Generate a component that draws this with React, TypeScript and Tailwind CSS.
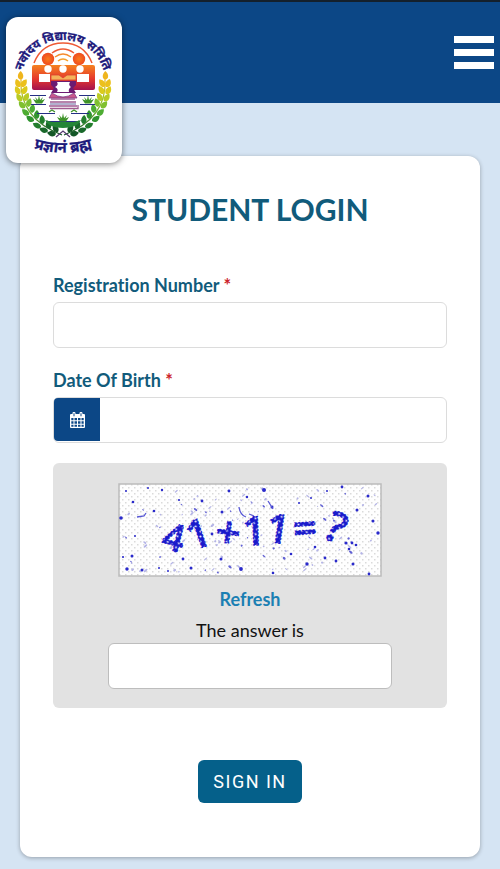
import React from "react";

const NAVY = "#1d1a7c";

// Leaves of the wreath's left half: position and angle.
const leaves: [number, number, number][] = [
  [21, 80, -92],
  [20, 87, -116], [22, 87, -60],
  [20, 94, -120], [23, 94, -64],
  [22, 101, -126], [25, 101, -68],
  [25, 108, -132], [28, 107, -74],
  [29, 115, -140], [32, 113, -82],
  [34, 121, -148], [37, 119, -90],
  [41, 127, -156], [43, 124, -98],
  [48, 131, -164], [50, 129, -108],
  [56, 134, -172], [58, 132, -122],
];

const leafColors = [
  "#efb51c", "#ecc01c", "#ecc01c", "#dccb1c", "#dccb1c", "#b9cb25", "#b9cb25", "#7fc02f", "#7fc02f",
  "#4dac32", "#4dac32", "#2f942f", "#2f942f", "#237d2d", "#237d2d", "#19682a", "#19682a", "#145727", "#145727",
];

function Wreath() {
  return (
    <g>
      <path d="M21 80Q19 118 62 135" fill="none" stroke="url(#stem)" strokeWidth="1.200" />
      {leaves.map(([x, y, a], i) => (
        <path
          key={i}
          d="M0 0C1.500 -4.200 6 -3.800 9 0C6 3.200 1.500 3.200 0 0Z"
          fill={leafColors[i]}
          transform={`translate(${x} ${y}) rotate(${a})`}
        />
      ))}
    </g>
  );
}

function Tuft({ x, y }: { x: number; y: number }) {
  return (
    <path
      d="M0 3.500H-3L-6 -1L-2.500 0.500L-4 -3L-1 0L0 -5L1 0L4 -3L2.500 0.500L6 -1L3 3.500Z"
      transform={`translate(${x} ${y})`}
      fill="#3d9227"
    />
  );
}

function Emblem() {
  return (
    <svg viewBox="6 17 116 146" className="block h-full w-full" role="img" aria-label="नवोदय विद्यालय समिति">
      <defs>
        <linearGradient id="stem" gradientUnits="userSpaceOnUse" x1="0" y1="78" x2="0" y2="135">
          <stop offset="0" stopColor="#efb51c" />
          <stop offset="0.500" stopColor="#7fc02f" />
          <stop offset="1" stopColor="#145727" />
        </linearGradient>
        <linearGradient id="desk" x1="0" y1="0" x2="0" y2="1">
          <stop offset="0" stopColor="#f58220" />
          <stop offset="0.550" stopColor="#e5382c" />
          <stop offset="1" stopColor="#a3124f" />
        </linearGradient>
        <radialGradient id="head">
          <stop offset="0" stopColor="#fa7a1a" />
          <stop offset="1" stopColor="#ee4a20" />
        </radialGradient>
        <path id="topArc" d="M21 82A42 42 0 0 1 105 82" />
        <path id="bottomArc" d="M30 147Q63 158 96 147" />
      </defs>
      <g
        fill={NAVY}
        stroke={NAVY}
        strokeWidth="0.300"
        textAnchor="middle"
        fontFamily="'Noto Sans Devanagari','Noto Sans','Lohit Devanagari',sans-serif"
        fontWeight="700"
        fontSize="12"
      >
        <text><textPath href="#topArc" startOffset="50%">नवोदय विद्यालय समिति</textPath></text>
        <text fontSize="15"><textPath href="#bottomArc" startOffset="50%">प्रज्ञानं ब्रह्म</textPath></text>
      </g>
      <Wreath />
      <g transform="translate(126 0) scale(-1 1)"><Wreath /></g>
      <g fill="none" stroke="#ee5a35" strokeWidth="1.500">
        <path d="M34 63Q42 43 63 43Q84 43 92 63" />
        <path d="M52 53Q63 45 74 53" />
        <path d="M55 57Q63 51 71 57" stroke="#f58a2c" />
        <path d="M58 61Q63 57 68 61" stroke="#f5a02c" />
      </g>
      <circle cx="48" cy="59" r="6.200" fill="url(#head)" />
      <circle cx="79" cy="59" r="6.200" fill="url(#head)" />
      <path d="M34 65H93Q95 65 95 67V88Q95 90 93 90H34Q32 90 32 88V67Q32 65 34 65Z" fill="url(#desk)" />
      <g fill="#fff">
        <circle cx="48" cy="69" r="3.700" />
        <circle cx="63" cy="69" r="3.700" />
        <circle cx="80" cy="69" r="3.700" />
        <path d="M39 74H50V82H39ZM77 74H89V82H77Z" />
      </g>
      <path d="M51 75H59L63 78L67 75H76V80H51Z" fill="#f4b25a" stroke="#d9432e" strokeWidth="0.800" />
      <path d="M51 81H76V85L73 88L76 93H51L54 88L51 85Z" fill="#6c1b72" />
      <path d="M57 82H70Q68 85 71 87Q68 89 69 92H57Q59 89 55 87Q59 85 57 82Z" fill="#fff" />
      <path d="M52 93Q63 101 74 93L77 98H49Z" fill="#c9588b" stroke="#7c3b86" strokeWidth="0.800" />
      <path d="M51 99H75M50 102H76M49 106H77M50 108.500H78V105" fill="none" stroke="#a05b91" strokeWidth="1.300" />
      <path d="M50 104H76" stroke="#3f3b87" strokeWidth="0.800" />
      <path d="M30 95.500H46M79 95.500H95M31 104.500H46M80 104.500H95M37 113.500H55M71 113.500H89M46 121.500H80" stroke="#252e85" strokeWidth="1.200" />
      <Tuft x={39} y={100} />
      <Tuft x={88} y={100} />
      <Tuft x={63} y={118} />
      <path d="M49 112L52 110L55 112M71 112L74 110L77 112" fill="none" stroke="#3d9227" strokeWidth="1.300" />
      <path d="M45 120L52 122H74L81 120Q77 128 63 128Q49 128 45 120Z" fill="#248536" />
      <path d="M56 137L63 131L70 137" fill="none" stroke="#563b71" strokeWidth="1.300" />
    </svg>
  );
}

// Specks of the captcha: x, y, radius.
const specks: [number, number, number][] = [
  [44, 7, 1.2], [146, 7, 2], [111, 8, 1.4], [224, 4, 1.4], [250, 13, 1.5], [15, 19, 1.3],
  [61, 17, 1.1], [84, 18, 1.4], [129, 14, 1.2], [154, 24, 1.5], [104, 29, 1.5], [3, 35, 1.8],
  [36, 28, 1.3], [239, 27, 1.5], [209, 8, 1], [30, 5, 1],
  [255, 38, 1.5], [260, 50, 1.7], [14, 73, 1.5], [5, 74, 1.1], [9, 86, 1.7], [24, 87, 1.5],
  [65, 76, 1.4], [73, 85, 1.5], [123, 86, 1.9], [103, 76, 1.5], [173, 71, 1.3], [197, 64, 1.3],
  [189, 81, 1.7], [207, 75, 1.4], [218, 78, 1.4], [235, 81, 1.5], [251, 91, 1.4], [155, 90, 1.3],
  [228, 60, 1.6], [231, 66, 1.3], [234, 60, 1.4], [238, 62, 1.3], [94, 51, 1.4],
  [8, 8, 1], [17, 53, 1], [41, 85, 1], [50, 88, 1], [181, 20, 1], [193, 15, 1],
];

// Captcha characters: glyph, centre x, centre y, rotation, size.
const glyphs: [string, number, number, number, number][] = [
  ["4", 56, 54, 14, 38],
  ["1", 80, 51, -19, 40],
  ["+", 110, 51, 8, 44],
  ["1", 136, 48, -2, 40],
  ["1", 160, 46, 8, 40],
  ["=", 187, 46, -4, 42],
  ["?", 218, 45, 24, 42],
];

function noise(n: number) {
  const v = Math.sin(n * 127.1) * 43758.5453;
  return v - Math.floor(v);
}

function Captcha() {
  return (
    <svg viewBox="0 0 264 94" className="block w-[264px]" role="img" aria-label="41+11=?">
      <defs>
        <pattern id="paper" width="6" height="6" patternUnits="userSpaceOnUse">
          <rect width="6" height="6" fill="#fefefe" />
          <rect x="1" y="1" width="1.500" height="1.500" fill="#dadada" />
          <rect x="4" y="4" width="1.500" height="1.500" fill="#dadada" />
        </pattern>
        <pattern id="ink" width="5" height="5" patternUnits="userSpaceOnUse" patternTransform="rotate(20)">
          <rect width="5" height="5" fill="#1919cb" />
          <circle cx="2.500" cy="2.500" r="1.100" fill="#f0f0ff" />
        </pattern>
      </defs>
      <rect x="1" y="1" width="262" height="92" fill="url(#paper)" stroke="#bcbcbc" strokeWidth="1.500" />
      {Array.from({ length: 120 }, (_, i) => (
        <ellipse
          key={i}
          cx={4 + noise(i + 1) * 256}
          cy={4 + noise(i + 301) * 86}
          rx={0.6 + noise(i + 601) * 1.7}
          ry={0.5 + noise(i + 901) * 0.7}
          fill={i % 4 ? "#b4b4e6" : "#6262d4"}
          transform={`rotate(${i % 2 ? -40 : 40} ${4 + noise(i + 1) * 256} ${4 + noise(i + 301) * 86})`}
        />
      ))}
      {specks.map(([x, y, r], i) => (
        <circle key={i} cx={x} cy={y} r={r} fill="#2a2acb" />
      ))}
      <path d="M121 24Q122 32 128 34M131 31L136 33M19 34L26 33L28 30M150 18L155 26" fill="none" stroke="#5757d5" strokeWidth="1.300" />
      {glyphs.map(([c, x, y, a, size], i) => (
        <text
          key={i}
          transform={`translate(${x} ${y}) rotate(${a})`}
          y={14}
          textAnchor="middle"
          fontFamily="'Open Sans',sans-serif"
          fontWeight="600"
          fontSize={size}
          fill="url(#ink)"
          stroke="#1919cb"
          strokeWidth="1.200"
          strokeDasharray="2 1.500"
        >
          {c}
        </text>
      ))}
    </svg>
  );
}

function CalendarIcon() {
  return (
    <svg viewBox="0 0 15 16" className="h-4 w-[15px]" fill="#fff" aria-hidden="true">
      <path
        fillRule="evenodd"
        d="M1 2H2.500V1.200Q2.500 0 3.500 0H4.300Q5.500 0 5.500 1.200V2H9.500V1.200Q9.500 0 10.500 0H11.300Q12.500 0 12.500 1.200V2H14Q15 2 15 3V15Q15 16 14 16H1Q0 16 0 15V3Q0 2 1 2ZM3.500 1.200V4.300H4.500V1.200ZM10.500 1.200V4.300H11.500V1.200ZM1.300 6V8.300H3.500V6ZM4.500 6V8.300H7V6ZM8 6V8.300H10.500V6ZM11.500 6V8.300H13.700V6ZM1.300 9.300V11.700H3.500V9.300ZM4.500 9.300V11.700H7V9.300ZM8 9.300V11.700H10.500V9.300ZM11.500 9.300V11.700H13.700V9.300ZM1.300 12.700V14.700H3.500V12.700ZM4.500 12.700V14.700H7V12.700ZM8 12.700V14.700H10.500V12.700ZM11.500 12.700V14.700H13.700V12.700Z"
      />
    </svg>
  );
}

function FieldLabel({ htmlFor, children }: { htmlFor: string; children: React.ReactNode }) {
  return (
    <label htmlFor={htmlFor} className="mb-[5px] block text-lg leading-6 font-bold text-[#115b7b]">
      {children} <span className="text-[#cc2229]">*</span>
    </label>
  );
}

export default function App() {
  return (
    <div className="min-h-screen bg-[#d5e4f3] pb-3 font-['Lato',sans-serif] [font-variant-ligatures:none]">
      <header className="relative flex h-[103px] items-center justify-end border-t-2 border-[#14202c] bg-[#0c4786] px-1.5">
        <a
          href="#home"
          className="absolute top-[15px] left-1.5 h-[146px] w-[116px] rounded-xl bg-white shadow-[0_1px_6px_rgba(0,0,0,0.5)]"
        >
          <Emblem />
        </a>
        <button type="button" aria-label="Menu" className="flex w-10 flex-col gap-1.5">
          <span className="h-[7px] w-full bg-white" />
          <span className="h-[7px] w-full bg-white" />
          <span className="h-[7px] w-full bg-white" />
        </button>
      </header>

      <main className="px-5 pt-[53px]">
        <form className="flex flex-col rounded-xl bg-white px-[33px] pt-[33px] pb-[54px] shadow-[0_1px_4px_rgba(0,0,0,0.3)]">
          <h1 className="mb-11 text-center text-[30px] leading-10 font-bold text-[#115b7b]">STUDENT LOGIN</h1>

          <FieldLabel htmlFor="reg">Registration Number</FieldLabel>
          <input id="reg" type="text" className="mb-5 h-[46px] w-full rounded-md border border-[#dcdcdc] bg-white px-3 outline-none" />

          <FieldLabel htmlFor="dob">Date Of Birth</FieldLabel>
          <div className="mb-5 flex h-[46px] rounded-md border border-[#dcdcdc] bg-white">
            <button type="button" aria-label="Open calendar" className="mb-px flex w-[46px] items-center justify-center rounded-l bg-[#0c4786]">
              <CalendarIcon />
            </button>
            <input id="dob" type="text" className="min-w-0 flex-1 rounded-r-md px-3 outline-none" />
          </div>

          <section className="flex flex-col items-center rounded-md bg-[#e2e2e2] pt-5 pb-[19px]">
            <Captcha />
            <a href="#refresh" className="mt-2 text-lg leading-7 font-bold text-[#1b7fb3]">Refresh</a>
            <label htmlFor="answer" className="mt-1 text-lg leading-[26px] text-[#111]">The answer is</label>
            <input id="answer" type="text" className="h-[46px] w-[284px] rounded-md border border-[#bdbdbd] bg-white px-3 outline-none" />
          </section>

          <button
            type="button"
            className="mt-[52px] h-[43px] self-center rounded-md bg-[#05608a] px-[15px] font-['Roboto',sans-serif] text-lg tracking-[1.5px] text-white"
          >
            SIGN IN
          </button>
        </form>
      </main>
    </div>
  );
}
